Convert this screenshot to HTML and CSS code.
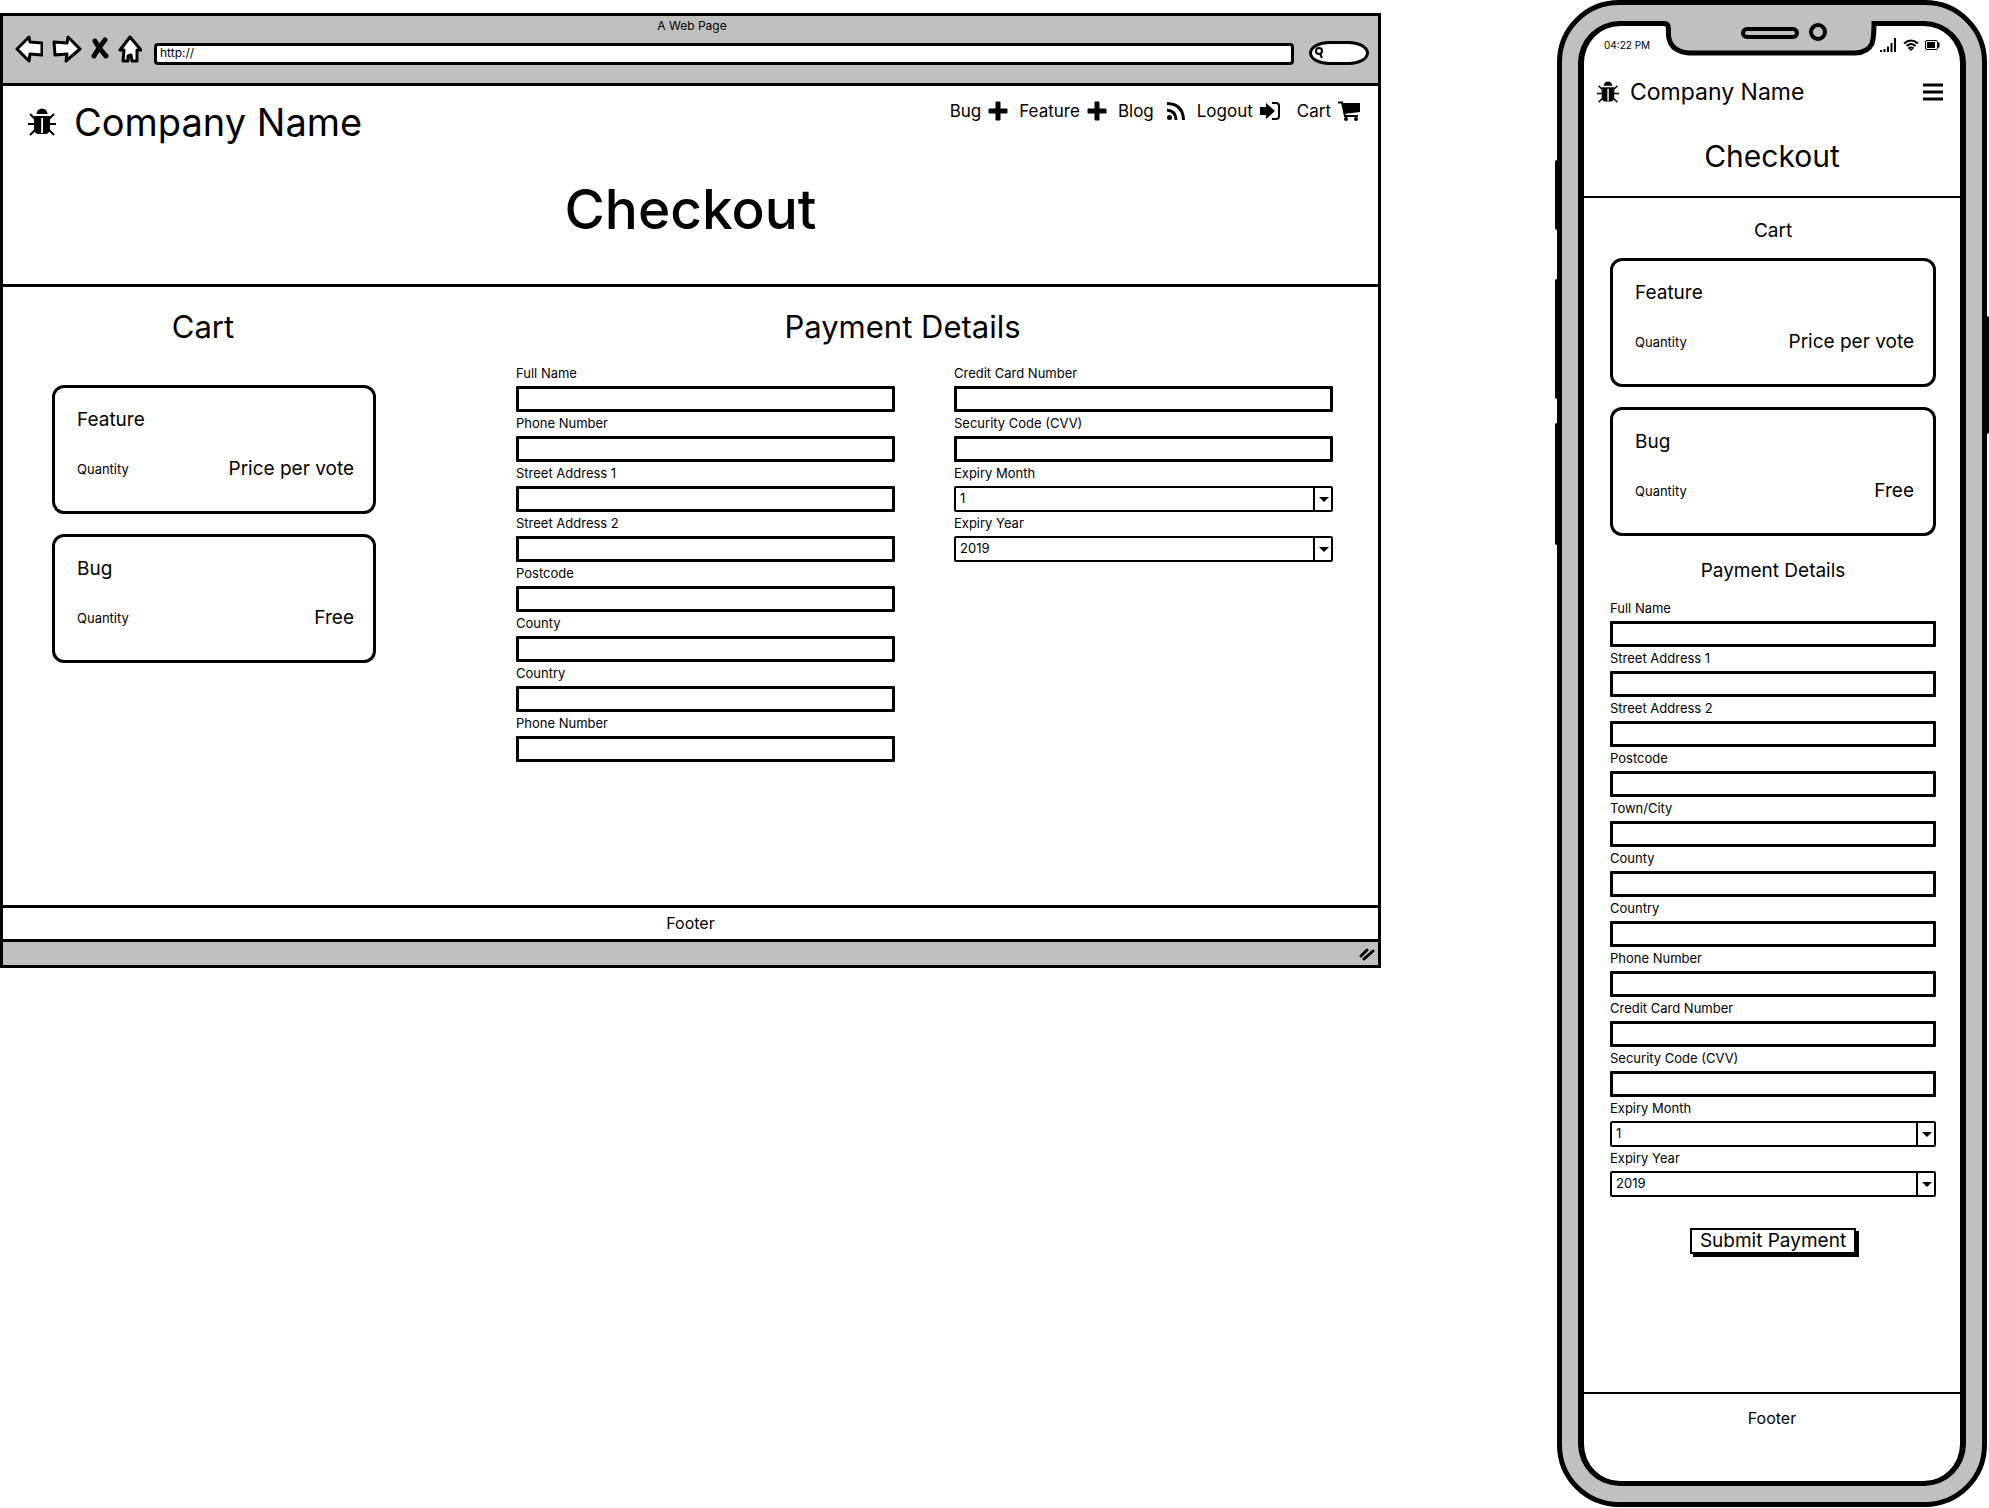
FILE: index.html
```html
<!DOCTYPE html>
<html lang="en">
<head>
<meta charset="utf-8">
<meta name="viewport" content="width=device-width, initial-scale=1">
<title>Checkout wireframes</title>
<link rel="stylesheet" href="styles.css">
</head>
<body>
<svg class="sprite" aria-hidden="true">
  <symbol id="bug" viewBox="0 0 28 28">
    <path d="M8.500 6a5.500 5.500 0 0 1 11 0z"/>
    <path d="M6 8h16v12q0 6-5 6h-6q-5 0-5-6z"/>
    <path d="M7 11 2 6M21 11l5-5M7 16H0M21 16h7M8 21l-6 6M20 21l6 6" fill="none" stroke="#000" stroke-width="2"/>
    <path d="M13.200 10h1.800v15h-1.800z" fill="#fff"/>
  </symbol>
  <symbol id="plus" viewBox="0 0 20 20">
    <path d="M8 1h4v7h7v4h-7v7H8v-7H1V8h7z" stroke="#000" stroke-linejoin="round"/>
  </symbol>
</svg>
<div class="board">
  <section class="browser" aria-label="Desktop">
    <div class="chrome">
      <p class="chrome-title">A Web Page</p>
      <div class="toolbar">
        <button class="tool" type="button" aria-label="Back"><svg width="28" height="28" viewBox="0 0 28 28"><path d="M2 14 14 2l1 5 12 1v12l-12-1-1 7z"/></svg></button>
        <button class="tool" type="button" aria-label="Forward"><svg width="30" height="28" viewBox="0 0 30 28"><path d="M28 14 16 2l-1 6L2 7l1 13 12-1-1 7z"/></svg></button>
        <button class="tool tool-stop" type="button" aria-label="Stop"><svg width="18" height="28" viewBox="0 0 18 28"><path d="M4 6q3 6 11 15M14 5Q9 11 3 21"/></svg></button>
        <button class="tool" type="button" aria-label="Home"><svg width="24" height="28" viewBox="0 0 24 28"><path d="M12 2 2 15h4l-1 11h5v-5l3-1 1 6h5V15h4z"/></svg></button>
        <input class="url" type="text" value="http://" aria-label="Address">
        <label class="search"><svg width="10" height="14" viewBox="0 0 10 14"><circle cx="5" cy="5" r="3"/><path d="m6 8 2 4"/></svg><input type="text" aria-label="Search"></label>
      </div>
    </div>
    <header class="site-header">
      <div class="site-row">
        <a class="brand" href="#"><svg width="28" height="28"><use href="#bug"/></svg>Company Name</a>
        <nav class="site-nav">
          <a href="#">Bug <svg width="20" height="20"><use href="#plus"/></svg></a>
          <a href="#">Feature <svg width="20" height="20"><use href="#plus"/></svg></a>
          <a class="blog" href="#">Blog <svg width="20" height="20" viewBox="0 0 20 20"><circle cx="3.500" cy="16.500" r="2.500"/><path d="M1 9q9 1 9 10M1 2.500Q17 3 17.500 19" fill="none" stroke="#000" stroke-width="3"/></svg></a>
          <a href="#">Logout <svg width="20" height="20" viewBox="0 0 20 20"><path d="M0 6h6V2l9 8-9 8v-4H0z"/><path d="M12 2h4q3 0 3 3v10q0 3-3 3h-4" fill="none" stroke="#000" stroke-width="2"/></svg></a>
          <a class="cart-link" href="#">Cart <svg width="22" height="20" viewBox="0 0 22 20"><path d="M4 2h18v9L6 13z"/><path d="M0 1.500h4l3 13.500h13" fill="none" stroke="#000" stroke-width="2"/><circle cx="8" cy="18" r="2"/><circle cx="18" cy="18" r="2"/></svg></a>
        </nav>
      </div>
      <h1>Checkout</h1>
    </header>
    <main class="site-main">
      <section class="cart">
        <h2>Cart</h2>
        <div class="cards">
          <article class="card"><h3>Feature</h3><p class="card-row"><span class="qty">Quantity</span><span>Price per vote</span></p></article>
          <article class="card"><h3>Bug</h3><p class="card-row"><span class="qty">Quantity</span><span>Free</span></p></article>
        </div>
      </section>
      <section class="payment">
        <h2>Payment Details</h2>
        <form class="columns">
          <div class="fields">
            <label for="d-name">Full Name</label><input id="d-name" type="text">
            <label for="d-phone">Phone Number</label><input id="d-phone" type="text">
            <label for="d-street1">Street Address 1</label><input id="d-street1" type="text">
            <label for="d-street2">Street Address 2</label><input id="d-street2" type="text">
            <label for="d-postcode">Postcode</label><input id="d-postcode" type="text">
            <label for="d-county">County</label><input id="d-county" type="text">
            <label for="d-country">Country</label><input id="d-country" type="text">
            <label for="d-phone2">Phone Number</label><input id="d-phone2" type="text">
          </div>
          <div class="fields">
            <label for="d-card">Credit Card Number</label><input id="d-card" type="text">
            <label for="d-cvv">Security Code (CVV)</label><input id="d-cvv" type="text">
            <label for="d-month">Expiry Month</label>
            <div class="select"><select id="d-month"><option>1</option><option>2</option><option>3</option></select></div>
            <label for="d-year">Expiry Year</label>
            <div class="select"><select id="d-year"><option>2019</option><option>2020</option><option>2021</option></select></div>
          </div>
        </form>
      </section>
    </main>
    <footer class="site-footer">Footer</footer>
    <div class="status-bar"><svg width="16" height="14" viewBox="0 0 16 14"><path d="m2 9 6-6M5 12l9-8" stroke="#000" stroke-width="3" stroke-linecap="round"/></svg></div>
  </section>

  <section class="phone" aria-label="Mobile">
    <span class="key key-mute"></span><span class="key key-up"></span><span class="key key-down"></span><span class="key key-power"></span>
    <div class="screen">
      <svg class="notch" width="216" height="37" viewBox="0 0 216 37">
        <path d="M0 0h216v2.500h-6q0 14-2 20-4 9-17 9.500H26Q8 31 5 17C3 9 6 3 0 2.500z" fill="#c0c0c0"/>
        <path d="M0 2.500c7 0 3 7 5 15Q8 31 26 32h165q13-.500 17-9.500 2-6 2-20h6" fill="none" stroke="#000" stroke-width="5"/>
        <rect x="79" y="8" width="54" height="8" rx="4" fill="#c0c0c0" stroke="#000" stroke-width="4"/>
        <circle cx="154" cy="11" r="7" fill="#c0c0c0" stroke="#000" stroke-width="4"/>
      </svg>
      <div class="phone-status">
        <span>04:22 PM</span>
        <span class="signals">
          <svg width="17" height="14" viewBox="0 0 17 14"><path d="M1 14v-2M4.500 14v-3M8 14V8.500M11.500 14V5M15 14V0" stroke="#000" stroke-width="2"/></svg>
          <svg width="16" height="12" viewBox="0 0 16 12"><path d="M1 4.500q7-6 14 0M3.500 7q4.500-4 9 0M5.500 9.500q2.500-2 5 0" fill="none" stroke="#000" stroke-width="2"/><path d="m8 12-2-2h4z"/></svg>
          <svg width="15" height="10" viewBox="0 0 15 10"><rect x=".5" y=".5" width="12" height="9" rx="1.500" fill="none" stroke="#000"/><path d="M2 2h8v6H2zM13 2.500h1.500v5H13z"/></svg>
        </span>
      </div>
      <header class="phone-header">
        <a class="brand" href="#"><svg width="22" height="22"><use href="#bug"/></svg>Company Name</a>
        <button class="menu" type="button" aria-label="Menu"><svg width="22" height="18" viewBox="0 0 22 18"><path d="M1 2h20M1 9h20M1 16h20" stroke="#000" stroke-width="3"/></svg></button>
      </header>
      <h1>Checkout</h1>
      <main class="phone-main">
        <h2>Cart</h2>
        <div class="cards">
          <article class="card"><h3>Feature</h3><p class="card-row"><span class="qty">Quantity</span><span>Price per vote</span></p></article>
          <article class="card"><h3>Bug</h3><p class="card-row"><span class="qty">Quantity</span><span>Free</span></p></article>
        </div>
        <h2 class="payment-title">Payment Details</h2>
        <form>
          <div class="fields">
            <label for="m-name">Full Name</label><input id="m-name" type="text">
            <label for="m-street1">Street Address 1</label><input id="m-street1" type="text">
            <label for="m-street2">Street Address 2</label><input id="m-street2" type="text">
            <label for="m-postcode">Postcode</label><input id="m-postcode" type="text">
            <label for="m-town">Town/City</label><input id="m-town" type="text">
            <label for="m-county">County</label><input id="m-county" type="text">
            <label for="m-country">Country</label><input id="m-country" type="text">
            <label for="m-phone">Phone Number</label><input id="m-phone" type="text">
            <label for="m-card">Credit Card Number</label><input id="m-card" type="text">
            <label for="m-cvv">Security Code (CVV)</label><input id="m-cvv" type="text">
            <label for="m-month">Expiry Month</label>
            <div class="select"><select id="m-month"><option>1</option><option>2</option><option>3</option></select></div>
            <label for="m-year">Expiry Year</label>
            <div class="select"><select id="m-year"><option>2019</option><option>2020</option><option>2021</option></select></div>
          </div>
          <button class="submit" type="submit">Submit Payment</button>
        </form>
      </main>
      <footer class="phone-footer">Footer</footer>
    </div>
  </section>
</div>
</body>
</html>
```
FILE: styles.css
```css
* { box-sizing: border-box; }

body {
  margin: 0;
  background: #fff;
  color: #000;
  font-family: Inter, "Open Sans", sans-serif;
  font-size: 18px;
}

h1, h2, h3, p { margin: 0; font-weight: 400; }
a { color: inherit; text-decoration: none; }
input, select, button { font: inherit; color: inherit; }
button { background: none; border: 0; padding: 0; }
svg { display: block; flex: none; }
.sprite { position: absolute; width: 0; height: 0; }

.board {
  display: grid;
  grid-template-columns: minmax(0, 1fr) 430px;
  column-gap: 176px;
  align-items: start;
  padding-right: 2px;
}

/* Desktop browser window */
.browser { margin-top: 13px; border: 3px solid #000; }

.chrome {
  background: #c0c0c0;
  border-bottom: 3px solid #000;
  padding: 0 9px 18px 12px;
}
.chrome-title { font-size: 12px; line-height: 19px; text-align: center; }
.toolbar { display: flex; align-items: end; gap: 9px; height: 30px; }
.tool { align-self: start; }
.tool path { fill: #fff; stroke: #000; stroke-width: 3; stroke-linejoin: round; stroke-linecap: round; }
.tool-stop path { fill: none; stroke-width: 5; }
.url {
  flex: 1;
  min-width: 0;
  height: 22px;
  margin: 0 6px 0 3px;
  border: 3px solid #000;
  border-radius: 4px;
  padding: 0 3px 3px;
  font-size: 12px;
}
.search {
  display: flex;
  align-items: center;
  width: 60px;
  height: 24px;
  padding-left: 2px;
  background: #fff;
  border: 3px solid #000;
  border-radius: 20px / 12px;
}
.search svg { fill: none; stroke: #000; stroke-width: 2; }
.search input { width: 36px; height: 14px; border: 0; padding: 0; background: none; font-size: 12px; }

.site-header { border-bottom: 3px solid #000; padding-bottom: 24px; }
.site-row { display: flex; justify-content: space-between; padding: 0 18px 0 25px; }
.brand { display: flex; align-items: center; }
.site-row .brand { gap: 18px; font-size: 38px; line-height: 72px; }
.site-nav { display: flex; gap: 11px; font-size: 17px; line-height: 50px; height: 50px; }
.site-nav a { display: flex; align-items: center; gap: 7px; }
.site-nav .blog { gap: 12px; }
.site-nav .cart-link { margin-left: 6px; }
.site-header h1 { font-size: 55px; font-weight: 500; line-height: 102px; text-align: center; }

.site-main {
  display: grid;
  grid-template-columns: 324px minmax(0, 1fr);
  column-gap: 140px;
  padding: 4px 45px 143px 49px;
}
.site-main h2 { font-size: 31px; line-height: 71px; text-align: center; }
.cart h2 { padding-right: 22px; }
.cart .cards { margin-top: 23px; }
.payment h2 { padding-right: 44px; }
.columns { display: grid; grid-template-columns: 1fr 1fr; column-gap: 59px; }

.site-footer {
  border-top: 3px solid #000;
  border-bottom: 3px solid #000;
  font-size: 16px;
  line-height: 31px;
  text-align: center;
}
.status-bar {
  display: flex;
  justify-content: end;
  align-items: center;
  height: 23px;
  padding-right: 3px;
  background: #c0c0c0;
}

/* Cart cards */
.cards { display: grid; gap: 20px; }
.card { height: 129px; padding: 20px 19px 0 22px; border: 3px solid #000; border-radius: 12px; }
.card h3 { font-size: 19px; line-height: 24px; }
.card-row { display: flex; justify-content: space-between; align-items: center; margin-top: 25px; font-size: 19px; line-height: 24px; }
.qty { font-size: 13px; }

/* Form fields */
.fields { display: grid; grid-auto-rows: 24px 26px; align-content: start; font-size: 13px; }
.fields label { line-height: 22px; }
.fields input {
  width: 100%;
  min-width: 0;
  border: 3px solid #000;
  border-radius: 1px;
  background: #fff;
  padding: 0 6px;
}
.select { position: relative; display: grid; }
.select select {
  appearance: none;
  width: 100%;
  height: 26px;
  border: 2px solid #000;
  border-radius: 2px;
  background: linear-gradient(#000, #000) right 16px top 0 / 2px 100% no-repeat #fff;
  padding: 0 24px 2px 4px;
}
.select::after {
  content: "";
  position: absolute;
  right: 4px;
  top: 11px;
  border: 5px solid transparent;
  border-top-color: #000;
  border-bottom: 0;
  pointer-events: none;
}

/* Phone */
.phone {
  position: relative;
  padding: 16px;
  border: 5px solid #000;
  border-radius: 62px;
  background: #c0c0c0;
}
.key { position: absolute; left: -7px; width: 4px; border-radius: 2px; background: #000; }
.key-mute { top: 155px; height: 70px; }
.key-up { top: 274px; height: 120px; }
.key-down { top: 418px; height: 122px; }
.key-power { left: auto; right: -7px; top: 311px; height: 118px; }
.screen {
  position: relative;
  border: solid #000;
  border-width: 5px 6px;
  border-radius: 42px;
  background: #fff;
}
.notch { position: absolute; top: -5px; left: 0; right: 0; margin: 0 auto; }
.phone-status {
  display: flex;
  justify-content: space-between;
  align-items: center;
  height: 37px;
  padding: 0 20px;
  font-size: 10px;
}
.signals { display: flex; align-items: center; gap: 6px; }
.phone-header { display: flex; justify-content: space-between; align-items: center; padding: 0 16px 0 13px; }
.phone-header .brand { gap: 11px; font-size: 23px; line-height: 58px; }
.screen h1 { padding-bottom: 5px; border-bottom: 2px solid #000; font-size: 30px; line-height: 70px; text-align: center; }
.phone-main { padding: 0 24px 138px 26px; }
.phone-main h2 { padding-top: 6px; font-size: 19px; line-height: 54px; text-align: center; }
.phone-main .payment-title { padding-top: 9px; line-height: 52px; }
.submit {
  display: block;
  height: 26px;
  margin: 31px auto 0;
  padding: 0 8px;
  border: 2px solid #000;
  background: #fff;
  box-shadow: 3px 3px 0 #000;
  font-size: 19px;
  line-height: 22px;
}
.phone-footer { height: 89px; border-top: 2px solid #000; font-size: 16px; line-height: 48px; text-align: center; }
```
